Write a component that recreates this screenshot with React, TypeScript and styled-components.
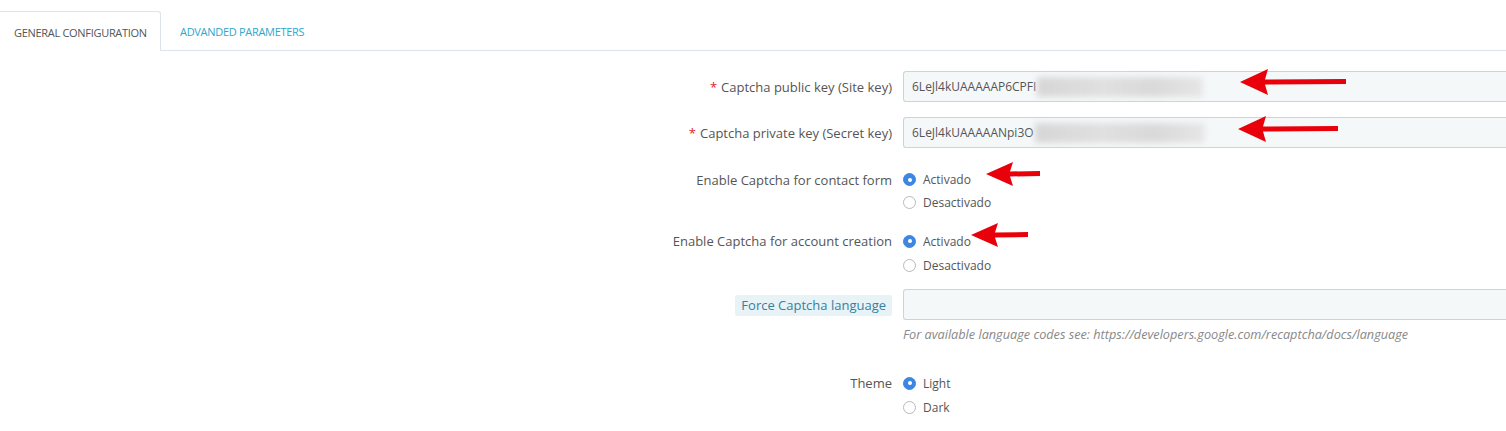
import React from "react";
import styled, { createGlobalStyle } from "styled-components";

const Global = createGlobalStyle`
  html, body { margin: 0; padding: 0; background: #fff; overflow: hidden; }
  body { font-family: "Open Sans", "DejaVu Sans", sans-serif; color: #555; width: 1506px; height: 431px; position: relative; }
`;

const TabBar = styled.div`
  display: flex;
  align-items: flex-end;
  padding-top: 11px;
  border-bottom: 1px solid #dde3e6;
  height: 39px;
`;

const Tab = styled.div<{ $active?: boolean }>`
  height: ${(p) => (p.$active ? "40px" : "39px")};
  box-sizing: border-box;
  display: flex;
  align-items: center;
  padding: 1px 14px 0 ${(p) => (p.$active ? "14px" : "19px")};
  margin-bottom: ${(p) => (p.$active ? "-1px" : "0")};
  font-family: "Open Sans", sans-serif;
  font-size: 11px;
  font-weight: 500;
  text-transform: uppercase;
  letter-spacing: -0.3px;
  color: ${(p) => (p.$active ? "#555" : "#2ea7cb")};
  background: #fff;
  border-top: 1px solid ${(p) => (p.$active ? "#dde3e6" : "transparent")};
  border-right: 1px solid ${(p) => (p.$active ? "#dde3e6" : "transparent")};
  border-top-right-radius: 3px;
  width: ${(p) => (p.$active ? "161px" : "auto")};
  white-space: nowrap;
`;

const Form = styled.div`
  padding-top: 20px;
`;

const Row = styled.div<{ $gap: number }>`
  display: grid;
  grid-template-columns: 892px 700px;
  column-gap: 11px;
  margin-bottom: ${(p) => p.$gap}px;
`;

const Label = styled.div<{ $center?: boolean }>`
  display: flex;
  justify-content: flex-end;
  align-items: ${(p) => (p.$center ? "center" : "flex-start")};
  font-size: 13px;
  color: #555;
  line-height: 24px;
`;

const Required = styled.span`
  color: #e2232b;
  margin-right: 4px;
`;

const TipLabel = styled.span`
  display: inline-block;
  background: #e8f3f8;
  color: #36809f;
  padding: 0 6px;
  line-height: 21px;
  border-radius: 2px;
  margin-top: 6px;
`;

const Input = styled.div`
  height: 31px;
  box-sizing: border-box;
  background: #f5f8f9;
  border: 1px solid #c8d6da;
  border-right: none;
  border-radius: 3px 0 0 3px;
  display: flex;
  align-items: center;
  padding-left: 8px;
  font-size: 12px;
  color: #555;
`;

const Blur = styled.span<{ $w: number }>`
  display: inline-block;
  width: ${(p) => p.$w}px;
  height: 20px;
  background: linear-gradient(90deg, #d6d6d6, #e0e0e0 40%, #d9d9d9 70%, #e6e6e6);
  filter: blur(3px);
  margin-left: 1px;
`;

const Radios = styled.div`
  display: flex;
  flex-direction: column;
`;

const RadioLine = styled.label<{ $h: number }>`
  display: flex;
  align-items: center;
  gap: 7px;
  height: ${(p) => p.$h}px;
  font-size: 12px;
  color: #555;
`;

const Dot = styled.span<{ $on?: boolean }>`
  width: 13px;
  height: 13px;
  border-radius: 50%;
  box-sizing: border-box;
  background: ${(p) => (p.$on ? "#3d87e0" : "#fff")};
  border: 1px solid ${(p) => (p.$on ? "#3d87e0" : "#b9b9b9")};
  display: flex;
  align-items: center;
  justify-content: center;
  &::after {
    content: "";
    width: 4px;
    height: 4px;
    border-radius: 50%;
    background: #fff;
    display: ${(p) => (p.$on ? "block" : "none")};
  }
`;

const Help = styled.div`
  font-size: 12.7px;
  font-style: italic;
  color: #888;
  margin-top: 5px;
  line-height: 18px;
`;

const Overlay = styled.svg`
  position: absolute;
  left: 0;
  top: 0;
  pointer-events: none;
`;

function Arrow({ tip, y, base, end, half, th }: { tip: number; y: number; base: number; end: number; half: number; th: number }) {
  const d = `M${tip} ${y} L${base} ${y - half} L${base - 3} ${y - th / 2} L${end} ${y - th / 2 - 0.5} L${end} ${y + th / 2 - 0.5} L${base - 3} ${y + th / 2} L${base} ${y + half} Z`;
  return <path d={d} fill="#e8000b" />;
}

function RadioGroup({ on, off, h = 24 }: { on: string; off: string; h?: number }) {
  return (
    <Radios>
      <RadioLine $h={h}>
        <Dot $on />
        {on}
      </RadioLine>
      <RadioLine $h={h}>
        <Dot />
        {off}
      </RadioLine>
    </Radios>
  );
}

export default function App() {
  return (
    <>
      <Global />
      <TabBar>
        <Tab $active>General configuration</Tab>
        <Tab>Advanded parameters</Tab>
      </TabBar>
      <Form>
        <Row $gap={15}>
          <Label $center>
            <span>
              <Required>*</Required>Captcha public key (Site key)
            </span>
          </Label>
          <Input>
            6LeJl4kUAAAAAP6CPFI<Blur $w={166} />
          </Input>
        </Row>
        <Row $gap={20}>
          <Label $center>
            <span>
              <Required>*</Required>Captcha private key (Secret key)
            </span>
          </Label>
          <Input>
            6LeJl4kUAAAAANpi3O<Blur $w={170} />
          </Input>
        </Row>
        <Row $gap={15}>
          <Label>Enable Captcha for contact form</Label>
          <RadioGroup on="Activado" off="Desactivado" h={23} />
        </Row>
        <Row $gap={12}>
          <Label>Enable Captcha for account creation</Label>
          <RadioGroup on="Activado" off="Desactivado" />
        </Row>
        <Row $gap={28}>
          <Label>
            <TipLabel>Force Captcha language</TipLabel>
          </Label>
          <div>
            <Input />
            <Help>For available language codes see: https://developers.google.com/recaptcha/docs/language</Help>
          </div>
        </Row>
        <Row $gap={0}>
          <Label>Theme</Label>
          <RadioGroup on="Light" off="Dark" />
        </Row>
      </Form>
      <Overlay width="1506" height="431" viewBox="0 0 1506 431">
        <Arrow tip={1240} y={82} base={1268} end={1346} half={13} th={5} />
        <Arrow tip={1238} y={129} base={1266} end={1338} half={13} th={5} />
        <Arrow tip={986} y={174} base={1013} end={1040} half={12} th={5} />
        <Arrow tip={971} y={235} base={998} end={1028} half={12} th={5} />
      </Overlay>
    </>
  );
}
